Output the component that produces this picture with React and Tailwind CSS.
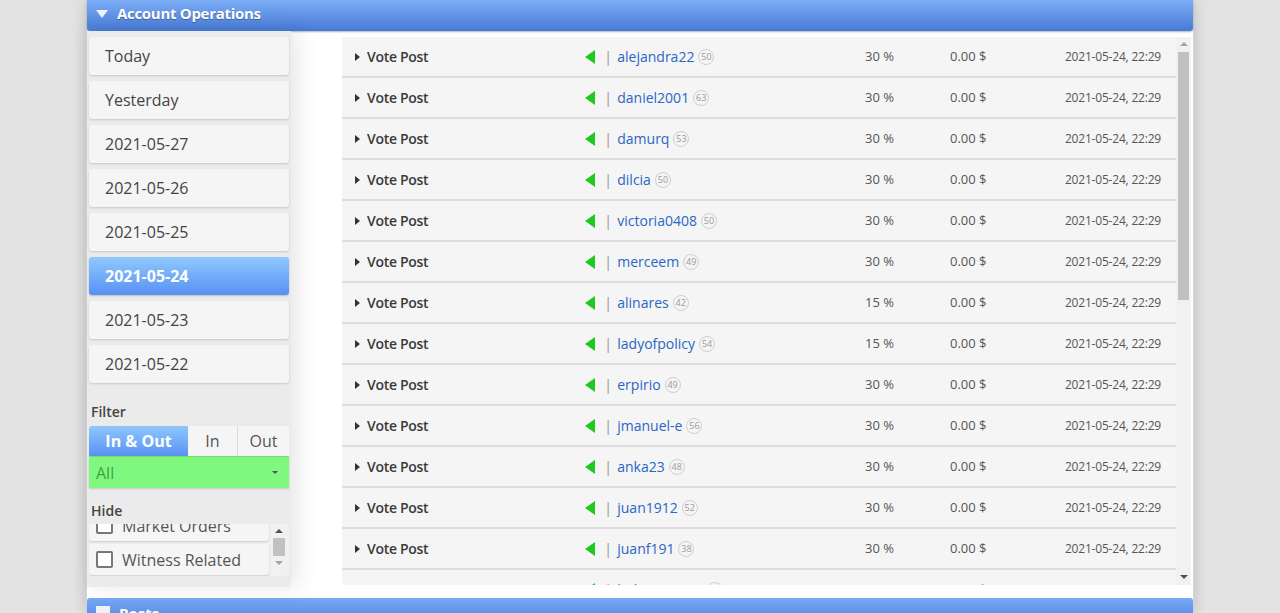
import React from 'react'

const font = { fontFamily: '"Open Sans", "Noto Sans", sans-serif' }

const days = ['Today', 'Yesterday', '2021-05-27', '2021-05-26', '2021-05-25', '2021-05-24', '2021-05-23', '2021-05-22']

const ops = [
  ['alejandra22', 50, 30],
  ['daniel2001', 63, 30],
  ['damurq', 53, 30],
  ['dilcia', 50, 30],
  ['victoria0408', 50, 30],
  ['merceem', 49, 30],
  ['alinares', 42, 15],
  ['ladyofpolicy', 54, 15],
  ['erpirio', 49, 30],
  ['jmanuel-e', 56, 30],
  ['anka23', 48, 30],
  ['juan1912', 52, 30],
  ['juanf191', 38, 30],
  ['bebeomega1', 51, 30],
  ['xabi1', 47, 30],
]

const Row = ({ name, rep, pct }) => (
  <div className="flex items-center h-[41px] bg-[#f5f5f5] border-b-2 border-[#dedede] shrink-0">
    <div className="w-[243px] flex items-center pl-[13px]">
      <span className="w-0 h-0 border-y-[4px] border-y-transparent border-l-[5px] border-l-[#333] mr-[7px]" />
      <span className="text-[14px] font-semibold tracking-[-0.3px] text-[#3a3a3a]">Vote Post</span>
    </div>
    <div className="w-[280px] flex items-center">
      <span className="w-0 h-0 border-y-[7px] border-y-transparent border-r-[10px] border-r-[#1fc91f]" />
      <span className="ml-[9px] text-[15px] text-[#9a9a9a]">|</span>
      <span className="ml-[5px] text-[14px] text-[#2a66c4]">{name}</span>
      <span className="ml-[4px] w-[16px] h-[16px] rounded-full border border-[#cfcfcf] text-[9px] text-[#999] flex items-center justify-center leading-none">{rep}</span>
    </div>
    <div className="w-[85px] text-[13px] text-[#555]">{pct} %</div>
    <div className="w-[90px] text-[13px] text-[#555]">0.00 $</div>
    <div className="flex-1 text-right pr-[15px] text-[12px] tracking-[-0.2px] text-[#555]">2021-05-24, 22:29</div>
  </div>
)

const Check = ({ label }) => (
  <div className="h-[31px] shrink-0 flex items-center bg-[#f5f5f5] rounded-[3px] shadow-[0_1px_2px_rgba(0,0,0,0.15)] px-[7px]">
    <span className="w-[17px] h-[17px] border-2 border-[#777] rounded-[2px] bg-white mr-[9px]" />
    <span className="text-[16px] text-[#555]">{label}</span>
  </div>
)

export default function App() {
  return (
    <div className="w-full h-[613px] overflow-hidden bg-[#e3e3e3] flex justify-center" style={font}>
      <div className="w-[1108px] h-full bg-white shadow-[0_0_14px_rgba(0,0,0,0.18)] border-x border-[#d4d4d4] flex flex-col">
        <div className="h-[31px] shrink-0 rounded-b-[3px] bg-gradient-to-b from-[#7cadf6] to-[#477ad6] flex items-center pl-[9px] pb-[4px] shadow-[0_1px_2px_rgba(0,0,0,0.3)]">
          <span className="w-0 h-0 border-x-[6px] border-x-transparent border-t-[8px] border-t-[#eef2f8] mr-[9px]" />
          <span className="text-white font-bold text-[15px] tracking-[-0.3px] [text-shadow:0_1px_1px_rgba(0,0,0,0.3)]">Account Operations</span>
        </div>

        <div className="flex h-[556px] shrink-0">
          <div className="w-[204px] shrink-0 bg-[#ebebeb] shadow-[6px_0_22px_rgba(0,0,0,0.1)] px-[2px] pt-[6px] pb-[10px] flex flex-col z-10">
            <div className="flex flex-col gap-[6px]">
              {days.map((d) =>
                d === '2021-05-24' ? (
                  <div key={d} className="h-[38px] rounded-[3px] bg-gradient-to-b from-[#90c9fd] to-[#5890f3] flex items-center pl-[16px] text-[16px] font-bold text-white shadow-[0_1px_2px_rgba(0,0,0,0.2)]">{d}</div>
                ) : (
                  <div key={d} className="h-[38px] rounded-[3px] bg-[#f5f5f5] flex items-center pl-[16px] text-[16px] text-[#444] shadow-[0_1px_2px_rgba(0,0,0,0.15)]">{d}</div>
                )
              )}
            </div>
            <div className="mt-[18px] pl-[2px] h-[20px] flex items-center text-[14px] font-semibold text-[#444]">Filter</div>
            <div className="mt-[5px] flex h-[30px] rounded-t-[3px] overflow-hidden bg-[#f5f5f5]">
              <div className="w-[99px] bg-gradient-to-b from-[#8ec7fd] to-[#5a92f3] text-white font-bold text-[16px] flex items-center justify-center">In &amp; Out</div>
              <div className="w-[50px] border-r border-[#dcdcdc] text-[16px] text-[#555] flex items-center justify-center">In</div>
              <div className="flex-1 text-[16px] text-[#555] flex items-center justify-center">Out</div>
            </div>
            <div className="h-[32px] bg-[#80f880] border-t border-[#6ee06e] flex items-center pl-[7px] pr-[11px] shadow-[0_1px_2px_rgba(0,0,0,0.15)]">
              <span className="flex-1 text-[16px] text-[#3aa33a]">All</span>
              <span className="w-0 h-0 border-x-[3px] border-x-transparent border-t-[3px] border-t-[#555]" />
            </div>
            <div className="mt-[12px] pl-[2px] h-[20px] flex items-center text-[14px] font-semibold text-[#444]">Hide</div>
            <div className="mt-[4px] h-[52px] flex bg-[#f0f0f0] overflow-hidden">
              <div className="flex-1 flex flex-col gap-[3px] -mt-[14px] pr-[2px]">
                <Check label="Market Orders" />
                <Check label="Witness Related" />
              </div>
              <div className="w-[16px] mr-[2px] bg-[#f1f1f1] flex flex-col items-center">
                <span className="mt-[5px] w-0 h-0 border-x-[4px] border-x-transparent border-b-[4px] border-b-[#505050]" />
                <span className="mt-[5px] w-[12px] h-[18px] bg-[#c1c1c1]" />
                <span className="mt-[5px] w-0 h-0 border-x-[4px] border-x-transparent border-t-[4px] border-t-[#a3a3a3]" />
              </div>
            </div>
          </div>

          <div className="flex-1 flex pt-[6px] pl-[51px] pr-[2px]">
            <div className="flex-1 h-[548px] overflow-hidden flex flex-col">
              {ops.map(([n, r, p], i) => (
                <Row key={i} name={n} rep={r} pct={p} />
              ))}
            </div>
            <div className="w-[15px] h-[548px] bg-[#f1f1f1] flex flex-col items-center">
              <span className="mt-[5px] w-0 h-0 border-x-[4px] border-x-transparent border-b-[4px] border-b-[#a3a3a3]" />
              <span className="mt-[6px] w-[11px] h-[248px] bg-[#c1c1c1]" />
              <span className="flex-1" />
              <span className="mb-[6px] w-0 h-0 border-x-[4px] border-x-transparent border-t-[4px] border-t-[#505050]" />
            </div>
          </div>
        </div>

        <div className="mt-[11px] h-[30px] shrink-0 rounded-t-[3px] bg-gradient-to-b from-[#76a9f7] to-[#4a7bd8] flex items-center pl-[9px]">
          <span className="w-[14px] h-[14px] bg-[#eef2f8] mr-[9px]" />
          <span className="text-white font-bold text-[15px]">Posts</span>
        </div>
      </div>
    </div>
  )
}
